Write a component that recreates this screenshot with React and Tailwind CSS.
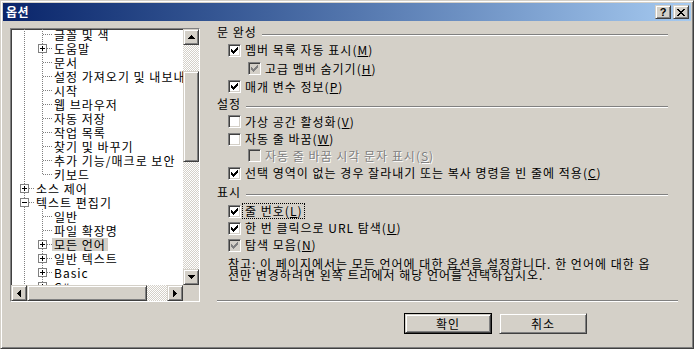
import React from "react";

const raised =
  "border border-t-[#d4d0c8] border-l-[#d4d0c8] border-r-[#404040] border-b-[#404040] shadow-[inset_1px_1px_0_#ffffff,inset_-1px_-1px_0_#808080] bg-[#d4d0c8]";
const sunken =
  "border border-t-[#808080] border-l-[#808080] border-r-white border-b-white shadow-[inset_1px_1px_0_#404040,inset_-1px_-1px_0_#d4d0c8]";
const dither =
  "bg-[image:repeating-conic-gradient(#d4d0c8_0_25%,#ffffff_0_50%)] bg-[length:2px_2px]";

const ARROWS = {
  up: { w: 7, h: 4, r: [[3, 0, 1, 1], [2, 1, 3, 1], [1, 2, 5, 1], [0, 3, 7, 1]] },
  down: { w: 7, h: 4, r: [[0, 0, 7, 1], [1, 1, 5, 1], [2, 2, 3, 1], [3, 3, 1, 1]] },
  left: { w: 4, h: 7, r: [[0, 3, 1, 1], [1, 2, 1, 3], [2, 1, 1, 5], [3, 0, 1, 7]] },
  right: { w: 4, h: 7, r: [[0, 0, 1, 7], [1, 1, 1, 5], [2, 2, 1, 3], [3, 3, 1, 1]] },
};

function Arrow({ dir }) {
  const a = ARROWS[dir];
  return (
    <svg width={a.w} height={a.h} shapeRendering="crispEdges">
      {a.r.map(([x, y, w, h], i) => (
        <rect key={i} x={x} y={y} width={w} height={h} fill="#000" />
      ))}
    </svg>
  );
}

function ScrollBtn({ dir }) {
  return (
    <div className={`w-[16px] h-[16px] shrink-0 flex items-center justify-center ${raised}`}>
      <Arrow dir={dir} />
    </div>
  );
}

// windows style check glyph, 7x7
function CheckGlyph({ color }) {
  const starts = [2, 3, 4, 3, 2, 1, 0];
  return (
    <svg width="7" height="7" shapeRendering="crispEdges">
      {starts.map((y, x) => (
        <rect key={x} x={x} y={y} width="1" height="3" fill={color} />
      ))}
    </svg>
  );
}

function Check({ checked, disabled }) {
  return (
    <span
      className={`w-[13px] h-[13px] shrink-0 flex items-center justify-center ${sunken} ${
        disabled ? "bg-[#d4d0c8]" : "bg-white"
      }`}
    >
      {checked && <CheckGlyph color={disabled ? "#808080" : "#000"} />}
    </span>
  );
}

// tree connector cell
function Cell({ kind }) {
  const v = kind[0];
  const box = kind[1];
  const dot = { stroke: "#808080", strokeWidth: 1, strokeDasharray: "1 1" };
  return (
    <svg width="18" height="14" className="shrink-0 overflow-visible" shapeRendering="crispEdges">
      {(v === "I" || v === "T") && <line x1="13.5" y1="0" x2="13.5" y2="14" {...dot} />}
      {v === "L" && <line x1="13.5" y1="0" x2="13.5" y2="8" {...dot} />}
      {(v === "T" || v === "L") && <line x1="14" y1="7.5" x2="23" y2="7.5" {...dot} />}
      {box && (
        <>
          <rect x="9.5" y="3.5" width="8" height="8" fill="#fff" stroke="#808080" />
          <line x1="11" y1="7.5" x2="16" y2="7.5" stroke="#000" />
          {box === "+" && <line x1="13.5" y1="5" x2="13.5" y2="10" stroke="#000" />}
        </>
      )}
    </svg>
  );
}

const TREE = [
  { c: ["I", "T"], t: "글꼴 및 색" },
  { c: ["I", "T+"], t: "도움말" },
  { c: ["I", "T"], t: "문서" },
  { c: ["I", "T"], t: "설정 가져오기 및 내보내기" },
  { c: ["I", "T"], t: "시작" },
  { c: ["I", "T"], t: "웹 브라우저" },
  { c: ["I", "T"], t: "자동 저장" },
  { c: ["I", "T"], t: "작업 목록" },
  { c: ["I", "T"], t: "찾기 및 바꾸기" },
  { c: ["I", "T"], t: "추가 기능/매크로 보안" },
  { c: ["I", "L"], t: "키보드" },
  { c: ["T+"], t: "소스 제어" },
  { c: ["T-"], t: "텍스트 편집기" },
  { c: ["I", "T"], t: "일반" },
  { c: ["I", "T"], t: "파일 확장명" },
  { c: ["I", "T+"], t: "모든 언어", sel: true },
  { c: ["I", "T+"], t: "일반 텍스트" },
  { c: ["I", "T+"], t: "Basic" },
  { c: ["I", "T+"], t: "C#" },
];

function Tree() {
  return (
    <div className={`w-[190px] h-[274px] shrink-0 flex flex-col bg-white ${sunken}`}>
      <div className="flex flex-1 min-h-0">
        <div className="flex-1 overflow-hidden">
          <div className="-mt-[2px]">
            {TREE.map((r, i) => (
              <div key={i} className="flex h-[14px] items-center whitespace-nowrap">
                {r.c.map((k, j) => (
                  <Cell key={j} kind={k} />
                ))}
                <span
                  className={`ml-[5px] px-[2px] leading-[13px] text-black ${
                    r.sel ? "bg-[#d4d0c8]" : ""
                  }`}
                >
                  {r.t}
                </span>
              </div>
            ))}
          </div>
        </div>
        <div className="w-[16px] flex flex-col shrink-0">
          <ScrollBtn dir="up" />
          <div className={`flex-1 flex flex-col ${dither}`}>
            <div className="h-[26px]" />
            <div className={`h-[91px] ${raised}`} />
          </div>
          <ScrollBtn dir="down" />
        </div>
      </div>
      <div className="flex h-[16px] shrink-0">
        <ScrollBtn dir="left" />
        <div className={`flex-1 flex ${dither}`}>
          <div className={`w-[120px] h-full ${raised}`} />
        </div>
        <ScrollBtn dir="right" />
        <div className="w-[16px] bg-[#d4d0c8]" />
      </div>
    </div>
  );
}

function Header({ title, h }) {
  return (
    <div className={`flex items-center ${h}`}>
      <span className="whitespace-nowrap">{title}</span>
      <div className="flex-1 mr-[10px] ml-[5px] mt-[6px] h-[2px] border-t border-t-[#808080] border-b border-b-white" />
    </div>
  );
}

function Row({ h, indent, checked, disabled, dim, focus, children }) {
  return (
    <div className={`flex items-center ${h} ${indent ? "pl-[31px]" : "pl-[11px]"}`}>
      <Check checked={checked} disabled={disabled} />
      <span
        className={`whitespace-nowrap ${
          dim ? "text-[#808080] [text-shadow:1px_1px_0_#ffffff]" : "text-black"
        } ${focus ? "ml-[2px] px-[2px] outline outline-1 outline-dotted outline-black" : "ml-[4px]"}`}
      >
        {children}
      </span>
    </div>
  );
}

export default function App() {
  return (
    <div
      className="w-[694px] h-[349px] flex flex-col p-[2px] bg-[#d4d0c8] border border-t-[#d4d0c8] border-l-[#d4d0c8] border-r-[#404040] border-b-[#404040] shadow-[inset_1px_1px_0_#ffffff,inset_-1px_-1px_0_#808080] text-[12px] leading-[14px] tracking-[1px] font-['Noto_Sans_CJK_KR','Noto_Sans',sans-serif] overflow-hidden"
    >
      {/* title bar */}
      <div className="h-[18px] shrink-0 flex items-center bg-linear-to-r from-[#0a246a] to-[#a6caf0] pl-[3px] pr-[2px]">
        <span className="text-white font-bold text-[12px] tracking-[0.5px]">옵션</span>
        <div className="flex-1" />
        <div className={`w-[16px] h-[14px] flex items-center justify-center ${raised}`}>
          <span className="font-['Liberation_Sans',sans-serif] font-bold text-[11px] leading-[11px] tracking-normal text-black">?</span>
        </div>
        <div className={`w-[16px] h-[14px] ml-[2px] flex items-center justify-center ${raised}`}>
          <svg width="8" height="7" shapeRendering="crispEdges">
            <path d="M0 0h2l2 2.5 2-2.5h2L5 3.5 8 7H6L4 4.5 2 7H0l3-3.5z" fill="#000" />
          </svg>
        </div>
      </div>

      {/* body */}
      <div className="flex flex-1 min-h-0">
        <div className="ml-[7px] mt-[7px]">
          <Tree />
        </div>

        <div className="ml-[17px] w-[461px] pt-[2px] flex flex-col">
          <Header title="문 완성" h="h-[18px]" />
          <Row h="h-[18px]" checked>
            멤버 목록 자동 표시(<u>M</u>)
          </Row>
          <Row h="h-[19px]" indent checked disabled>
            고급 멤버 숨기기(<u>H</u>)
          </Row>
          <Row h="h-[17px]" checked>
            매개 변수 정보(<u>P</u>)
          </Row>
          <Header title="설정" h="h-[17px]" />
          <Row h="h-[19px]">
            가상 공간 활성화(<u>V</u>)
          </Row>
          <Row h="h-[16px]">
            자동 줄 바꿈(<u>W</u>)
          </Row>
          <Row h="h-[17px]" indent disabled dim>
            자동 줄 바꿈 시각 문자 표시(<u>S</u>)
          </Row>
          <Row h="h-[18px]" checked>
            선택 영역이 없는 경우 잘라내기 또는 복사 명령을 빈 줄에 적용(<u>C</u>)
          </Row>
          <Header title="표시" h="h-[20px]" />
          <Row h="h-[18px]" checked focus>
            줄 번호(<u>L</u>)
          </Row>
          <Row h="h-[16px]" checked>
            한 번 클릭으로 URL 탐색(<u>U</u>)
          </Row>
          <Row h="h-[18px]" checked disabled>
            탐색 모음(<u>N</u>)
          </Row>
          <p className="mt-[4px] pl-[11px] leading-[11px] whitespace-nowrap">
            참고: 이 페이지에서는 모든 언어에 대한 옵션을 설정합니다. 한 언어에 대한 옵
            <br />
            션만 변경하려면 왼쪽 트리에서 해당 언어를 선택하십시오.
          </p>

          <div className="mt-[20px] h-[2px] border-t border-t-[#808080] border-b border-b-white" />

          <div className="flex mt-[11px] pl-[187px] gap-[7px]">
            <button className="w-[88px] h-[21px] border border-black p-0">
              <div className={`w-full h-full flex items-center justify-center ${raised}`}>확인</div>
            </button>
            <button className={`w-[88px] h-[21px] flex items-center justify-center ${raised}`}>
              취소
            </button>
          </div>
        </div>
      </div>
    </div>
  );
}
